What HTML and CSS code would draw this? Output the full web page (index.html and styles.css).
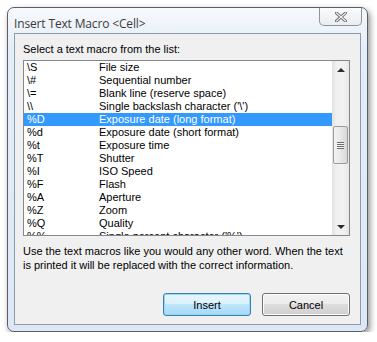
FILE: index.html
```html
<!DOCTYPE html>
<html lang="en">
<head>
  <meta charset="UTF-8">
  <title>Insert Text Macro</title>
  <link rel="stylesheet" href="styles.css">
</head>
<body>
  <div class="window">
    <div class="titlebar">
      <span class="title">Insert Text Macro &lt;Cell&gt;</span>
      <button class="close" aria-label="Close">
        <svg width="12" height="10" viewBox="0 0 12 10">
          <path d="M1.5 1 L10.5 9 M10.5 1 L1.5 9" stroke="#6b6b6b" stroke-width="3" stroke-linecap="square"/>
          <path d="M1.5 1 L10.5 9 M10.5 1 L1.5 9" stroke="#f4f4f4" stroke-width="1.2" stroke-linecap="square"/>
        </svg>
      </button>
    </div>
    <div class="client">
      <div class="label">Select a text macro from the list:</div>
      <div class="listbox">
        <ul class="items">
          <li><span class="code">\S</span><span>File size</span></li>
          <li><span class="code">\#</span><span>Sequential number</span></li>
          <li><span class="code">\=</span><span>Blank line (reserve space)</span></li>
          <li><span class="code">\\</span><span>Single backslash character ('\')</span></li>
          <li class="selected"><span class="code">%D</span><span>Exposure date (long format)</span></li>
          <li><span class="code">%d</span><span>Exposure date (short format)</span></li>
          <li><span class="code">%t</span><span>Exposure time</span></li>
          <li><span class="code">%T</span><span>Shutter</span></li>
          <li><span class="code">%I</span><span>ISO Speed</span></li>
          <li><span class="code">%F</span><span>Flash</span></li>
          <li><span class="code">%A</span><span>Aperture</span></li>
          <li><span class="code">%Z</span><span>Zoom</span></li>
          <li><span class="code">%Q</span><span>Quality</span></li>
          <li><span class="code">%%</span><span>Single percent character ('%')</span></li>
        </ul>
        <div class="scrollbar">
          <div class="arrow up"></div>
          <div class="track">
            <div class="thumb"><span class="grip"></span></div>
          </div>
          <div class="arrow down"></div>
        </div>
      </div>
      <p class="hint">Use the text macros like you would any other word. When the text is printed it will be replaced with the correct information.</p>
      <div class="actions">
        <button class="btn default">Insert</button>
        <button class="btn">Cancel</button>
      </div>
    </div>
  </div>
</body>
</html>
```

FILE: styles.css
```css
body {
  margin: 0;
  background-color: #fff;
  font-family: "Liberation Sans", Arial, sans-serif;
  font-size: 11px;
  color: #000;
}

.window {
  margin: 7px 0 0 7px;
  width: 361px;
  height: 325px;
  border: 1px solid #5a5e66;
  border-radius: 7px;
  background: linear-gradient(#f7f9fc, #e4edf8 40px, #dde8f6);
  box-shadow: 2px 3px 6px rgba(0, 0, 0, 0.45);
  display: flex;
  flex-direction: column;
  padding: 0 6px 6px 6px;
  box-sizing: border-box;
}

.titlebar {
  height: 25px;
  display: flex;
  align-items: flex-start;
  justify-content: space-between;
}

.title {
  font-family: "Open Sans", "Liberation Sans", sans-serif;
  font-size: 12px;
  color: #3b3b3b;
  padding-top: 7px;
  letter-spacing: -0.15px;
}

.close {
  width: 43px;
  height: 18px;
  margin-right: -1px;
  border: 1px solid #8f949b;
  border-top: none;
  border-radius: 0 0 5px 5px;
  background: linear-gradient(#fbfbfc, #e9edf2);
  display: flex;
  align-items: center;
  justify-content: center;
  padding: 0;
}

.client {
  flex: 1;
  border: 1px solid #8d9bab;
  background-color: #f0f0f0;
  padding: 8px 10px 0 8px;
  display: flex;
  flex-direction: column;
}

.label {
  height: 18px;
  line-height: 14px;
}

.listbox {
  height: 174px;
  border: 1px solid #828790;
  background-color: #fff;
  display: flex;
  overflow: hidden;
}

.items {
  flex: 1;
  list-style: none;
  margin: 0;
  padding: 0;
  overflow: hidden;
}

.items li {
  height: 13px;
  line-height: 13px;
  padding-left: 3px;
  display: flex;
  white-space: nowrap;
}

.items .code {
  width: 72px;
}

.items .selected {
  background-color: #3399ff;
  color: #fff;
}

.scrollbar {
  width: 17px;
  display: flex;
  flex-direction: column;
  background: linear-gradient(90deg, #e3e3e3, #f1f1f1 30%, #f1f1f1 70%, #e6e6e6);
}

.arrow {
  height: 17px;
  position: relative;
}

.arrow::after {
  content: "";
  position: absolute;
  left: 5px;
  border-left: 4px solid transparent;
  border-right: 4px solid transparent;
}

.arrow.up::after {
  top: 7px;
  border-bottom: 4px solid #2b2b2b;
}

.arrow.down::after {
  top: 7px;
  border-top: 4px solid #2b2b2b;
}

.track {
  flex: 1;
  padding-top: 48px;
}

.thumb {
  height: 36px;
  margin: 0 1px;
  border: 1px solid #9b9b9b;
  border-radius: 2px;
  background: linear-gradient(90deg, #f3f3f3, #e8e8e8 50%, #d8d8d8);
  display: flex;
  align-items: center;
  justify-content: center;
}

.grip {
  width: 7px;
  height: 7px;
  background: repeating-linear-gradient(#6e6e6e 0 1px, #f4f4f4 1px 2px);
}

.hint {
  margin: 8px 0 0;
  line-height: 14px;
}

.actions {
  margin-top: 21px;
  display: flex;
  justify-content: flex-end;
  gap: 11px;
}

.btn {
  width: 88px;
  height: 23px;
  font-family: "Liberation Sans", Arial, sans-serif;
  font-size: 11px;
  color: #000;
  border: 1px solid #707070;
  border-radius: 3px;
  background: linear-gradient(#f2f2f2, #ebebeb 50%, #dddddd 50%, #cfcfcf);
  box-shadow: inset 0 0 0 1px #fcfcfc;
  padding: 0;
}

.btn.default {
  border-color: #3c7fb1;
  background: linear-gradient(#eaf6fd, #d9f0fc 50%, #bee6fd 50%, #a7d9f5);
  box-shadow: inset 0 0 0 1px #8fd8f6;
}
```
